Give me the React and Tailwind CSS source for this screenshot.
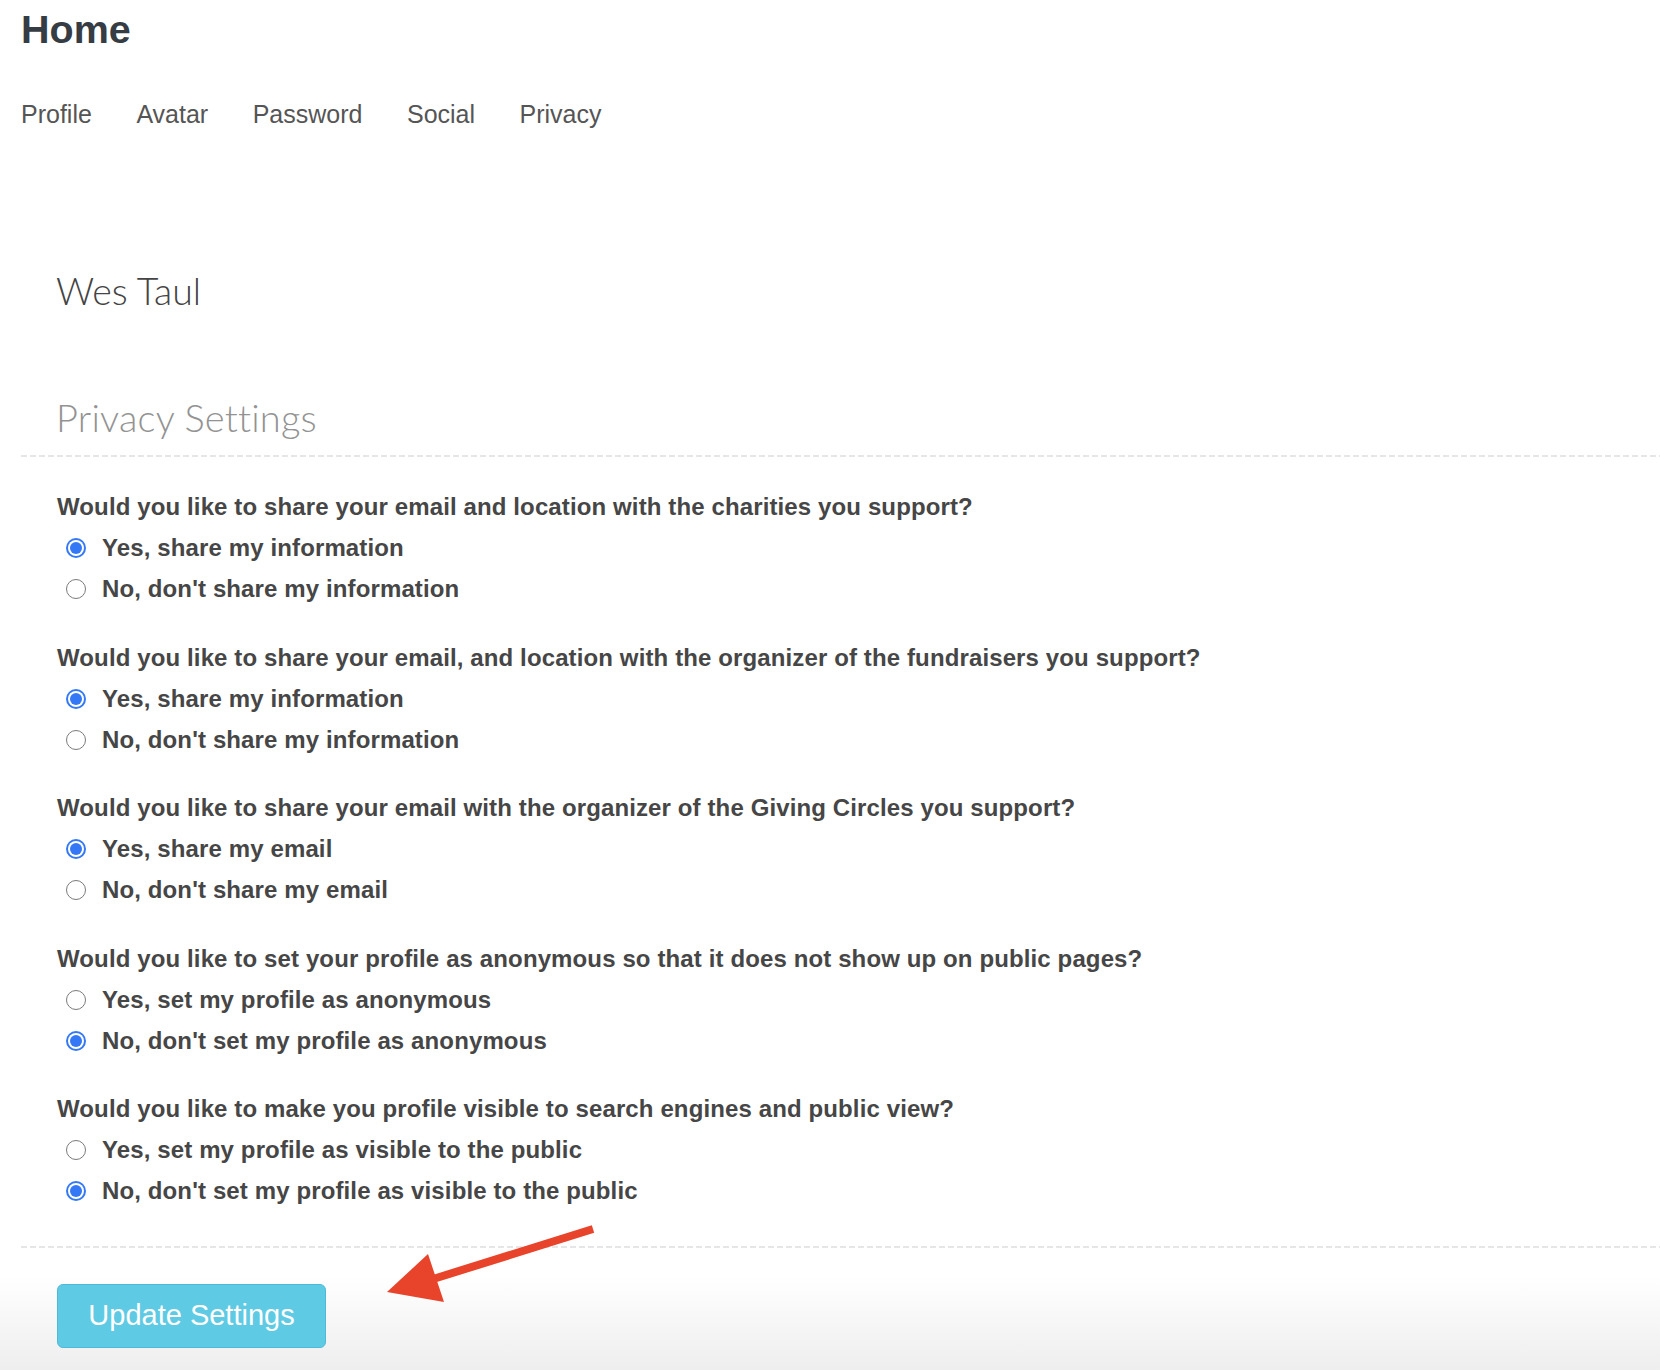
import React, { useState } from 'react';

const questions = [
  {
    name: 'charities',
    text: 'Would you like to share your email and location with the charities you support?',
    options: ['Yes, share my information', "No, don't share my information"],
    initial: 0,
  },
  {
    name: 'organizer',
    text: 'Would you like to share your email, and location with the organizer of the fundraisers you support?',
    options: ['Yes, share my information', "No, don't share my information"],
    initial: 0,
  },
  {
    name: 'circles',
    text: 'Would you like to share your email with the organizer of the Giving Circles you support?',
    options: ['Yes, share my email', "No, don't share my email"],
    initial: 0,
  },
  {
    name: 'anonymous',
    text: 'Would you like to set your profile as anonymous so that it does not show up on public pages?',
    options: ['Yes, set my profile as anonymous', "No, don't set my profile as anonymous"],
    initial: 1,
  },
  {
    name: 'visible',
    text: 'Would you like to make you profile visible to search engines and public view?',
    options: ['Yes, set my profile as visible to the public', "No, don't set my profile as visible to the public"],
    initial: 1,
  },
];

const tabs = ['Profile', 'Avatar', 'Password', 'Social', 'Privacy'];

function Radio({ checked }) {
  if (checked) {
    return (
      <span className="flex h-[20px] w-[20px] shrink-0 items-center justify-center rounded-full bg-[#3478f6]">
        <span className="flex h-[16px] w-[16px] items-center justify-center rounded-full bg-white">
          <span className="h-[12px] w-[12px] rounded-full bg-[#3478f6]" />
        </span>
      </span>
    );
  }
  return <span className="h-[20px] w-[20px] shrink-0 rounded-full border border-[#7a7a7a] bg-white" />;
}

function Dashed() {
  return (
    <div className="h-[2px] w-full bg-[repeating-linear-gradient(to_right,#e6e6e6_0px,#e6e6e6_6px,transparent_6px,transparent_9px)]" />
  );
}

export default function App() {
  const [answers, setAnswers] = useState(questions.map(q => q.initial));

  const choose = (qi, oi) => {
    setAnswers(prev => prev.map((a, i) => (i === qi ? oi : a)));
  };

  return (
    <div className="relative min-h-[1370px] overflow-hidden bg-[linear-gradient(180deg,#ffffff_1275px,#eeeeee_1370px)] pl-[21px] font-['Liberation_Sans',Arial,sans-serif]">
      <h1 className="mt-[10px] text-[39.5px] font-bold leading-none text-[#363c43]">Home</h1>

      <nav className="mt-[52px] flex gap-[44.5px] text-[25px] leading-none text-[#555555]">
        {tabs.map(tab => (
          <a key={tab} href="#" className="block">
            {tab}
          </a>
        ))}
      </nav>

      <div className="pl-[35px]">
        <h2 className="mt-[145px] font-['Lato','Liberation_Sans',sans-serif] text-[37.5px] font-light leading-none text-[#444444]">
          Wes Taul
        </h2>
        <h3 className="mt-[89px] font-['Lato','Liberation_Sans',sans-serif] text-[38px] font-light leading-none tracking-[0.2px] text-[#939393]">
          Privacy Settings
        </h3>
      </div>

      <div className="mt-[19px]">
        <Dashed />
      </div>

      <form className="mt-[29.5px] flex flex-col gap-[27.5px] pl-[36px] text-[24px] font-bold tracking-[0.12px] text-[#464646]">
        {questions.map((q, qi) => (
          <div key={q.name}>
            <div className="flex h-[41px] items-center">{q.text}</div>
            {q.options.map((opt, oi) => (
              <label
                key={opt}
                className="flex h-[41px] cursor-pointer items-center gap-[16px] pl-[9px]"
                onClick={() => choose(qi, oi)}
              >
                <Radio checked={answers[qi] === oi} />
                <span>{opt}</span>
              </label>
            ))}
          </div>
        ))}
      </form>

      <div className="mt-[34.5px]">
        <Dashed />
      </div>

      <div className="mt-[36px] pl-[36px]">
        <button
          type="button"
          className="h-[64px] w-[269px] rounded-[6px] border border-[#4fbad8] bg-[#5fcae3] text-[29px] text-white"
        >
          Update Settings
        </button>
      </div>

      <svg
        className="pointer-events-none absolute left-0 top-0"
        width="1660"
        height="1370"
        viewBox="0 0 1660 1370"
      >
        <line x1="593" y1="1229" x2="430" y2="1280" stroke="#e8432b" strokeWidth="8" />
        <polygon points="428,1254 387,1292 444,1302" fill="#e8432b" />
      </svg>
    </div>
  );
}
